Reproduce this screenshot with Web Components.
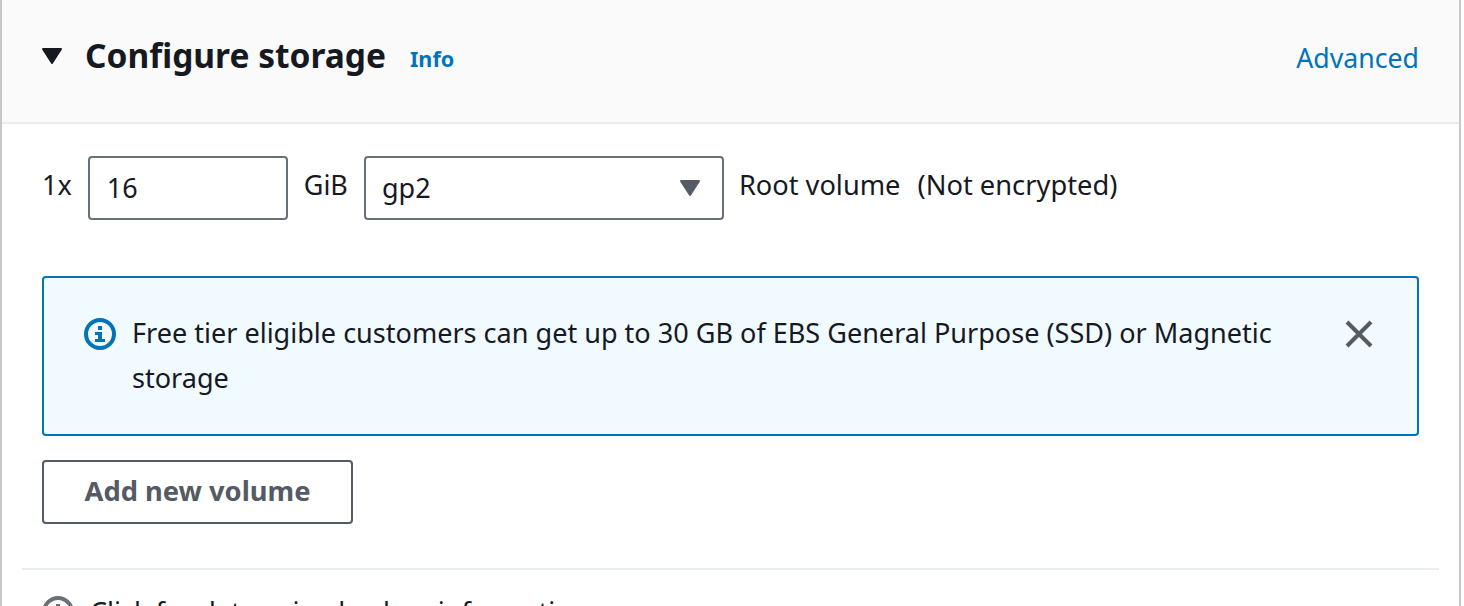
<!DOCTYPE html>
<html>
<head>
<meta charset="utf-8">
<style>
	html, body { margin: 0; padding: 0; background: #fff; overflow: hidden; height: 606px; width: 1464px; }
	body { font-family: "Noto Sans", sans-serif; color: #16191f; }
</style>
</head>
<body>
<storage-panel>
	<span slot="title">Configure storage</span>
	<volume-row></volume-row>
	<info-alert>Free tier eligible customers can get up to 30 GB of EBS General Purpose (SSD) or Magnetic storage</info-alert>
	<outline-button>Add new volume</outline-button>
	<backup-note>Click for determine backup information</backup-note>
</storage-panel>

<script>
class StoragePanel extends HTMLElement {
	constructor() {
		super();
		this.attachShadow({ mode: 'open' });
	}

	connectedCallback() {
		this.shadowRoot.innerHTML = `
			<style>
				:host {
					display: block;
					width: 1461px;
					height: 606px;
					box-sizing: border-box;
					border-left: 2px solid #c6c9cc;
					border-right: 2px solid #c6c9cc;
					overflow: hidden;
				}
				header {
					display: flex;
					align-items: center;
					height: 124px;
					box-sizing: border-box;
					padding: 0 40px 12px 40px;
					background: #fafafa;
					border-bottom: 2px solid #eaeded;
				}
				.caret { width: 20px; height: 16px; margin: 2px 23px 0 0; flex: none; }
				h2 { margin: 0; font-size: 33.5px; line-height: 44px; font-weight: 700; color: #16191f; }
				.info { margin-left: 24px; margin-top: 7px; font-size: 21.6px; font-weight: 700; color: #0073bb; }
				.advanced { margin-left: auto; margin-top: 4px; font-size: 26.7px; color: #0073bb; }
				.body { padding: 32px 40px 0 40px; display: flex; flex-direction: column; }
			</style>
			<header>
				<svg class="caret" viewBox="0 0 20 16"><path d="M1 1h18L10 15z" fill="#16191f" stroke="#16191f" stroke-width="2" stroke-linejoin="round"/></svg>
				<h2><slot name="title"></slot></h2>
				<span class="info">Info</span>
				<span class="advanced">Advanced</span>
			</header>
			<div class="body"><slot></slot></div>
		`;
	}
}

class VolumeRow extends HTMLElement {
	constructor() {
		super();
		this.attachShadow({ mode: 'open' });
	}

	connectedCallback() {
		this.shadowRoot.innerHTML = `
			<style>
				:host { display: flex; align-items: flex-start; font-size: 27px; line-height: 58px; color: #16191f; }
				.box {
					box-sizing: border-box;
					height: 64px;
					border: 2px solid #687078;
					border-radius: 4px;
					display: flex;
					align-items: center;
					padding: 0 16px;
					background: #fff;
				}
				.qty { width: 200px; margin: 0 16px; padding-left: 17px; }
				.type { width: 360px; margin: 0 15px 0 16px; justify-content: space-between; }
				.type svg { width: 20px; height: 16px; flex: none; margin: 0 6px 0 0; }
				.lab { margin-right: 17px; font-size: 27.2px; }
				.enc { font-size: 27.3px; }
			</style>
			<span>1x</span>
			<div class="box qty">16</div>
			<span>GiB</span>
			<div class="box type">gp2
				<svg viewBox="0 0 20 16"><path d="M1 1h18L10 15z" fill="#545b64" stroke="#545b64" stroke-width="2" stroke-linejoin="round"/></svg>
			</div>
			<span class="lab">Root volume</span>
			<span class="enc">(Not encrypted)</span>
		`;
	}
}

class InfoAlert extends HTMLElement {
	constructor() {
		super();
		this.attachShadow({ mode: 'open' });
	}

	connectedCallback() {
		this.shadowRoot.innerHTML = `
			<style>
				:host {
					display: flex;
					align-items: flex-start;
					box-sizing: border-box;
					margin-top: 56px;
					height: 160px;
					padding: 32px 42px 0 40px;
					background: #f1faff;
					border: 2px solid #0073bb;
					border-radius: 4px;
					font-size: 27.05px;
					line-height: 45px;
					color: #16191f;
				}
				.icon { width: 32px; height: 32px; flex: none; margin: 8px 16px 0 0; }
				.text { flex: 1; }
				.close { width: 32px; height: 32px; flex: none; margin: 8px 0 0 48px; }
			</style>
			<svg class="icon" viewBox="0 0 32 32">
				<circle cx="16" cy="16" r="14" fill="none" stroke="#0073bb" stroke-width="4"/>
				<path d="M14 8h4v4h-4zM11 14h7v7h3v3H11v-3h3v-4h-3z" fill="#0073bb"/>
			</svg>
			<div class="text"><slot></slot></div>
			<svg class="close" viewBox="0 0 32 32">
				<path d="M4 4l24 24M28 4L4 28" fill="none" stroke="#545b64" stroke-width="4"/>
			</svg>
		`;
	}
}

class OutlineButton extends HTMLElement {
	constructor() {
		super();
		this.attachShadow({ mode: 'open' });
	}

	connectedCallback() {
		this.shadowRoot.innerHTML = `
			<style>
				:host {
					display: flex;
					align-items: center;
					justify-content: center;
					align-self: flex-start;
					box-sizing: border-box;
					width: 311px;
					height: 64px;
					margin-top: 24px;
					padding-bottom: 4px;
					border: 2px solid #545b64;
					border-radius: 4px;
					font-size: 27.3px;
					font-weight: 700;
					color: #545b64;
				}
			</style>
			<slot></slot>
		`;
	}
}

class BackupNote extends HTMLElement {
	constructor() {
		super();
		this.attachShadow({ mode: 'open' });
	}

	connectedCallback() {
		this.shadowRoot.innerHTML = `
			<style>
				:host {
					display: flex;
					align-items: center;
					margin: 44px -20px 0 -20px;
					padding: 20px 20px 0 20px;
					border-top: 2px solid #eaeded;
					font-size: 27px;
					line-height: 44px;
					color: #16191f;
				}
				svg { width: 32px; height: 32px; flex: none; margin-right: 16px; }
			</style>
			<svg viewBox="0 0 32 32">
				<circle cx="16" cy="16" r="14" fill="none" stroke="#687078" stroke-width="4"/>
				<path d="M14 8h4v4h-4zM11 14h7v7h3v3H11v-3h3v-4h-3z" fill="#687078"/>
			</svg>
			<span><slot></slot></span>
		`;
	}
}

customElements.define('storage-panel', StoragePanel);
customElements.define('volume-row', VolumeRow);
customElements.define('info-alert', InfoAlert);
customElements.define('outline-button', OutlineButton);
customElements.define('backup-note', BackupNote);
</script>
</body>
</html>
